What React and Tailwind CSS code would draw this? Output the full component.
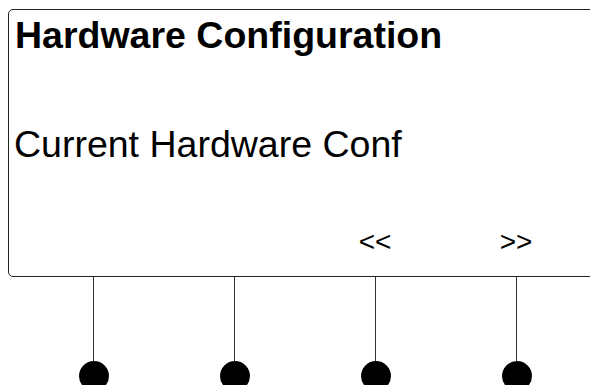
import React from "react";

const keys = ["", "", "<<", ">>"];

const App = () => {
  return (
    <div className="w-[590px] h-[385px] overflow-hidden bg-white text-black font-['Liberation_Sans',Arial,sans-serif]">
      <div className="ml-[8px] mt-[9px] w-[610px] h-[268px] border-[1.5px] border-[#222] rounded-[5px] flex flex-col">
        <div className="pl-[6px] pt-[7px] text-[37.5px] font-bold leading-none whitespace-nowrap">
          Hardware Configuration
        </div>
        <div className="pl-[5px] mt-[71.5px] text-[37.5px] leading-none whitespace-nowrap">
          Current Hardware Conf
        </div>
        <div className="grid grid-cols-4 w-[564px] ml-[13.5px] mt-[64px] text-[28px] leading-none">
          {keys.map((k, i) => (
            <div key={i} className="text-center h-[28px]">
              {k}
            </div>
          ))}
        </div>
      </div>
      <div className="grid grid-cols-4 w-[564px] ml-[23px]">
        {keys.map((_, i) => (
          <div key={i} className="flex flex-col items-center">
            <div className="w-px h-[84px] bg-[#333]" />
            <div className="w-[30px] h-[30px] rounded-full bg-black" />
          </div>
        ))}
      </div>
    </div>
  );
};

export default App;
